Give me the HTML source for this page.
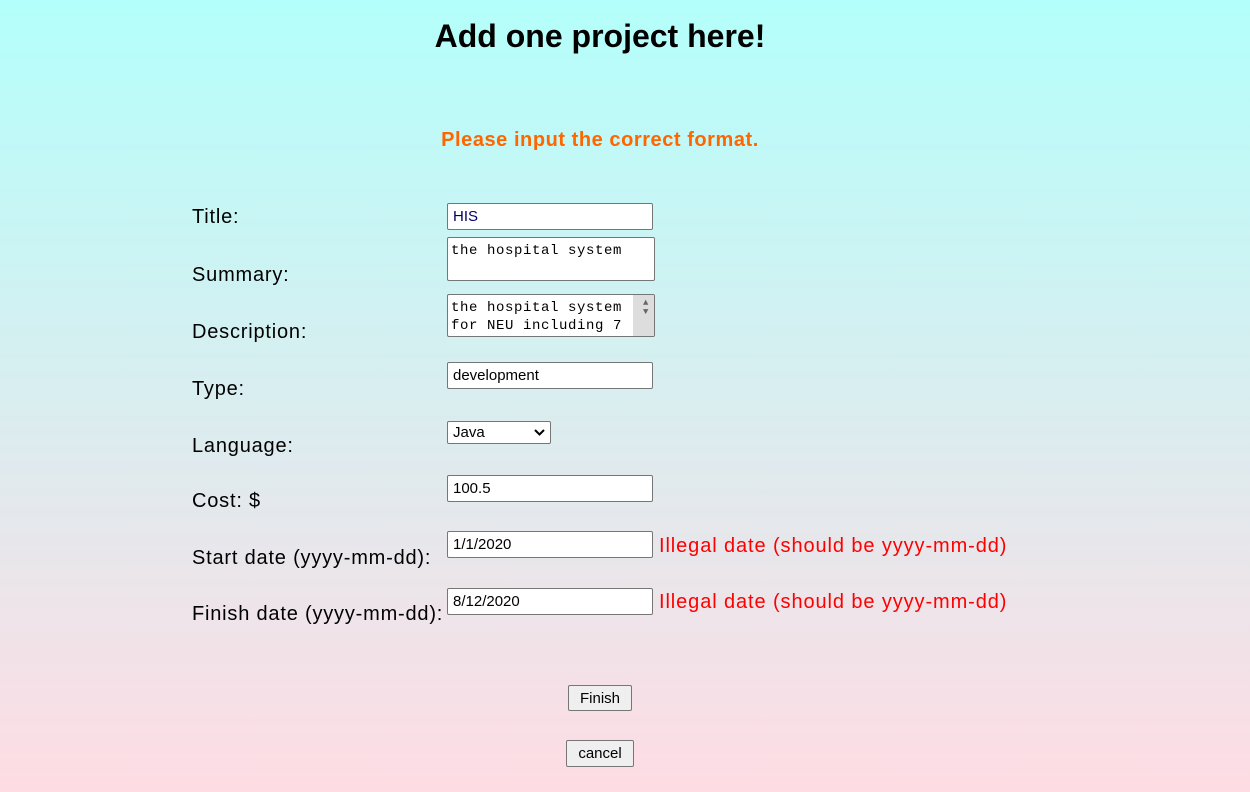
<!DOCTYPE html>
<html><head><meta charset="utf-8"><style>
html,body{margin:0;padding:0}
body{width:1250px;height:792px;position:relative;overflow:hidden;background:linear-gradient(#b3fffb,#ffdce4);font-family:"Liberation Sans",sans-serif;color:#000}
.a{position:absolute;white-space:nowrap}
.l{font-size:20px;left:192px;line-height:24px;letter-spacing:0.8px;top:1px}
.in{position:absolute;left:447px;width:206px;height:27px;border:1px solid #767676;border-radius:2px;background:#fff;box-sizing:border-box;font-size:15px;line-height:25px;padding-left:5px}
.ta{position:absolute;left:447px;width:208px;border:1px solid #767676;border-radius:2px;background:#fff;box-sizing:border-box;font-family:"Liberation Mono",monospace;font-size:14px;line-height:18px;padding:4px 3px;white-space:pre;overflow:hidden;letter-spacing:0.6px}
.err{left:659px;font-size:20px;color:#f00;line-height:24px;letter-spacing:0.9px}
.btn{position:absolute;border:1px solid #767676;border-radius:2px;background:#efefef;font-size:15px;text-align:center;line-height:25px;box-sizing:border-box}
</style></head><body>
<div class="a" style="left:0;width:1200px;text-align:center;top:16px;font-size:32px;font-weight:bold;line-height:40px">Add one project here!</div>
<div class="a" style="left:0;width:1200px;text-align:center;top:128px;font-size:20px;font-weight:bold;color:#ff6600;line-height:24px;letter-spacing:0.55px">Please input the correct format.</div>

<div class="a l" style="top:205px">Title:</div>
<div class="a l" style="top:263px">Summary:</div>
<div class="a l" style="top:320px">Description:</div>
<div class="a l" style="top:377px">Type:</div>
<div class="a l" style="top:434px">Language:</div>
<div class="a l" style="top:489px">Cost: $</div>
<div class="a l" style="top:546px">Start date (yyyy-mm-dd):</div>
<div class="a l" style="top:602px">Finish date (yyyy-mm-dd):</div>

<div class="in" style="top:203px;color:#000066">HIS</div>
<div class="ta" style="top:237px;height:44px">the hospital system</div>
<div class="ta" style="top:294px;height:43px">the hospital system
for NEU including 7<span style="position:absolute;right:0;top:0;width:21px;height:41px;background:#ddd"></span><span style="position:absolute;right:5px;top:4px;font-size:9px;color:#666;line-height:9px">▲<br>▼</span></div>
<div class="in" style="top:362px">development</div>
<div class="in" style="top:421px;width:104px;height:23px;line-height:21px">Java<svg style="position:absolute;right:5px;top:7px" width="11" height="7" viewBox="0 0 11 7"><path d="M1 1l4.5 4.5L10 1" stroke="#000" stroke-width="2" fill="none"/></svg></div>
<div class="in" style="top:475px">100.5</div>
<div class="in" style="top:531px">1/1/2020</div>
<div class="a err" style="top:534px">Illegal date (should be yyyy-mm-dd)</div>
<div class="in" style="top:588px">8/12/2020</div>
<div class="a err" style="top:590px">Illegal date (should be yyyy-mm-dd)</div>

<div class="btn" style="left:568px;top:685px;width:64px;height:26px">Finish</div>
<div class="btn" style="left:566px;top:740px;width:68px;height:27px">cancel</div>
</body></html>
